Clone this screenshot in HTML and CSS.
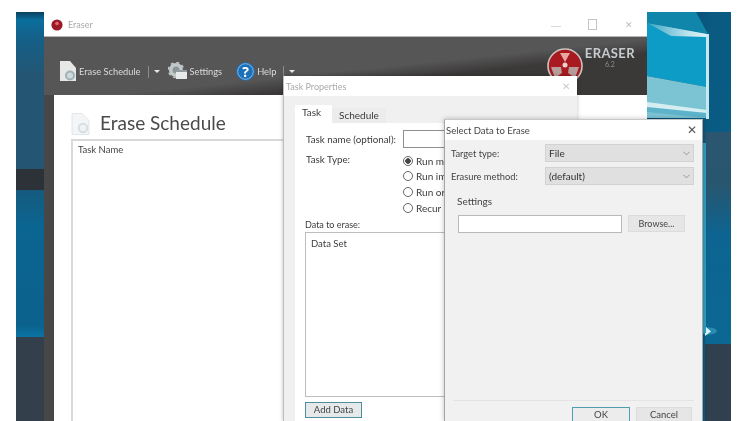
FILE: index.html
```html
<!DOCTYPE html>
<html lang="en">
<head>
<meta charset="utf-8">
<title>Eraser</title>
<link rel="stylesheet" href="styles.css">
</head>
<body>
<div class="desktop">
  <svg class="wallpaper" viewBox="0 0 715 409" width="715" height="409" aria-hidden="true">
    <defs>
      <linearGradient id="leftUpper" x1="0" y1="0" x2="0" y2="1"><stop offset="0" stop-color="#0a3f5c"/><stop offset=".05" stop-color="#0a6f9c"/><stop offset=".16" stop-color="#14608a"/><stop offset=".4" stop-color="#245673"/><stop offset="1" stop-color="#245673"/></linearGradient>
      <linearGradient id="leftLower" x1="0" y1="0" x2="0" y2="1"><stop offset="0" stop-color="#155a7e"/><stop offset=".25" stop-color="#0b6591"/><stop offset=".92" stop-color="#0b628c"/><stop offset="1" stop-color="#0a74a4"/></linearGradient>
      <linearGradient id="rightLower" x1="0" y1="0" x2="0" y2="1"><stop offset="0" stop-color="#2c566f"/><stop offset=".18" stop-color="#28566f"/><stop offset=".35" stop-color="#0d6490"/><stop offset=".9" stop-color="#0a6a94"/><stop offset="1" stop-color="#1c5673"/></linearGradient>
      <linearGradient id="rightTop" x1="0" y1="0" x2="1" y2="1"><stop offset="0" stop-color="#0a3f5e"/><stop offset=".4" stop-color="#0a5a82"/><stop offset="1" stop-color="#0a5f86"/></linearGradient>
      <linearGradient id="streak" x1="0" y1="0" x2="1" y2="0"><stop offset="0" stop-color="#3aa5c4"/><stop offset=".7" stop-color="#bfe4ee"/><stop offset="1" stop-color="#e0f3f7"/></linearGradient>
    </defs>
    <rect width="28" height="158" fill="url(#leftUpper)"/>
    <rect y="157" width="28" height="21" fill="#2c3238"/>
    <rect y="178" width="28" height="147" fill="url(#leftLower)"/>
    <rect y="325" width="28" height="84" fill="#333f4b"/>

    <rect x="631" width="84" height="409" fill="url(#rightTop)"/>
    <polygon points="631,0 680,0 692,22 631,11" fill="#0f86aa"/>
    <polygon points="631,11 691,22 691,75 631,64" fill="#0c9cc6"/>
    <polygon points="631,64 691,75 691,106 631,106" fill="#7cc3d3"/>
    <polygon points="631,91 691,99 691,106 631,100" fill="#5cb3ca"/>
    <polygon points="631,90 691,98 691,101 631,95" fill="#d5eef2"/>
    <polygon points="631,11 691,22 691,25 655,24" fill="url(#streak)"/>
    <rect x="690" y="22" width="3" height="85" fill="#c6e8f0"/>

    <rect x="689" y="120" width="26" height="289" fill="url(#rightLower)"/>
    <rect x="689" y="332" width="26" height="77" fill="#30404e"/>
    <ellipse cx="692" cy="319" rx="9" ry="3.500" fill="#4fb7d8" opacity=".45"/>
    <polygon points="689,314 695,319.500 689,324" fill="#d9f5fb"/>
    <rect x="687" y="131" width="3" height="190" fill="#2fa0c0"/>
  </svg>

  <section class="window main-window">
    <header class="titlebar">
      <svg class="app-dot" viewBox="0 0 12 12" aria-hidden="true"><circle cx="6" cy="6" r="5.600" fill="#9c1b28"/><circle cx="6" cy="4.500" r="1.800" fill="#e46a70"/></svg>
      <span class="app-name">Eraser</span>
      <span class="spacer"></span>
      <span class="winbtn min"></span>
      <span class="winbtn max"></span>
      <span class="winbtn close">✕</span>
    </header>
    <div class="toolbar">
      <svg class="tool-doc" viewBox="0 0 18 21" aria-hidden="true"><path d="M1 0h10l6 7v13H1z" fill="#e6e8e8"/><circle cx="11" cy="14.500" r="5" fill="#9fb2b8"/><circle cx="11" cy="14.500" r="3" fill="#cfd8da"/></svg>
      <span class="tool-label">Erase Schedule</span>
      <span class="tool-sep"></span>
      <span class="tool-arrow"></span>
      <svg class="tool-gear" viewBox="0 0 19 19" aria-hidden="true"><circle cx="8" cy="8" r="7" fill="#c3c9c9"/><circle cx="8" cy="8" r="7.500" fill="none" stroke="#c3c9c9" stroke-width="1.500" stroke-dasharray="3 2.900"/><circle cx="8" cy="8" r="3.500" fill="#8b9599"/><rect x="8" y="8" width="11" height="9" fill="#e7eaea"/><rect x="8" y="8" width="11" height="2" fill="#8f9ba0"/></svg>
      <span class="tool-label">Settings</span>
      <svg class="tool-help" viewBox="0 0 19 19" aria-hidden="true"><circle cx="9.500" cy="9.500" r="9.300" fill="#1b70b8"/><circle cx="9.500" cy="9.500" r="7.800" fill="none" stroke="#9cc8ea" stroke-width=".8"/><text x="9.500" y="14.500" text-anchor="middle" class="q-mark">?</text></svg>
      <span class="tool-label">Help</span>
      <span class="tool-sep"></span>
      <span class="tool-arrow"></span>
      <span class="spacer"></span>
      <svg class="logo" viewBox="0 0 36 36" aria-hidden="true"><circle cx="18" cy="18" r="17" fill="#a81a20" stroke="#c9c4c0" stroke-width="1.600"/><path d="M13 5h10l-5 9z" fill="#e8a8a0"/><path d="M4 19h10l1 6-7 5z" fill="#b89c9c"/><path d="M32 19H22l-1 6 7 5z" fill="#b89c9c"/><circle cx="18" cy="17" r="2.500" fill="#f0d0c8"/></svg>
      <div class="brand"><span class="brand-name">ERASER</span><span class="brand-ver">6.2</span></div>
    </div>
    <div class="main-body">
      <div class="schedule-panel">
        <h1 class="schedule-title">
          <svg class="head-doc" viewBox="0 0 19 22" aria-hidden="true"><path d="M1 .5h10l7 7V21.500H1z" fill="#f3f5f6" stroke="#e2e6e8"/><circle cx="12" cy="15" r="5.200" fill="#d5dfe3"/><circle cx="12" cy="15" r="3.200" fill="#f0f3f4"/></svg>
          <span class="schedule-text">Erase Schedule</span>
        </h1>
        <div class="task-list">Task Name</div>
      </div>
    </div>
  </section>

  <section class="window task-window">
    <header class="dialog-title faded">
      <span>Task Properties</span>
      <span class="spacer"></span>
      <span class="dialog-close faint">✕</span>
    </header>
    <div class="task-body">
      <div class="tabs">
        <span class="tab active">Task</span>
        <span class="tab">Schedule</span>
      </div>
      <div class="tab-page">
        <div class="form-row name-row">
          <label class="form-label">Task name (optional):</label>
          <span class="textbox name-box"></span>
        </div>
        <div class="form-row type-row">
          <label class="form-label">Task Type:</label>
          <div class="radio-group">
            <div class="radio-item"><span class="radio on"></span>Run m</div>
            <div class="radio-item"><span class="radio"></span>Run im</div>
            <div class="radio-item"><span class="radio"></span>Run or</div>
            <div class="radio-item"><span class="radio"></span>Recur</div>
          </div>
        </div>
        <div class="data-label">Data to erase:</div>
        <div class="data-box">Data Set</div>
        <button class="btn add-data" type="button">Add Data</button>
      </div>
    </div>
  </section>

  <section class="window select-window">
    <header class="dialog-title">
      <span>Select Data to Erase</span>
      <span class="spacer"></span>
      <span class="dialog-close">✕</span>
    </header>
    <div class="select-body">
      <div class="select-row target">
        <label class="select-label">Target type:</label>
        <div class="combo"><span>File</span><svg class="chev" viewBox="0 0 8 5" aria-hidden="true"><path d="M.5.500 4 4 7.500.500" fill="none" stroke="#8a8a8a"/></svg></div>
      </div>
      <div class="select-row method">
        <label class="select-label">Erasure method:</label>
        <div class="combo"><span>(default)</span><svg class="chev" viewBox="0 0 8 5" aria-hidden="true"><path d="M.5.500 4 4 7.500.500" fill="none" stroke="#8a8a8a"/></svg></div>
      </div>
      <div class="settings-label">Settings</div>
      <div class="browse-row">
        <span class="textbox path-box"></span>
        <button class="btn browse" type="button">Browse...</button>
      </div>
      <span class="spacer"></span>
      <div class="action-row">
        <button class="btn ok" type="button">OK</button>
        <button class="btn cancel" type="button">Cancel</button>
      </div>
    </div>
  </section>
</div>
</body>
</html>
```

FILE: styles.css
```css
* { box-sizing: border-box; }
html, body { margin: 0; height: 100%; background: #fff; overflow: hidden; }
body { font-family: Lato, "Open Sans", sans-serif; color: #3c3c3c; font-size: 10px; }

.desktop { position: absolute; left: 16px; top: 12px; width: 715px; height: 409px; overflow: hidden; filter: blur(.55px); }
.wallpaper { position: absolute; left: 0; top: 0; display: block; }
.spacer { flex: 1; }

.window { position: absolute; display: flex; flex-direction: column; }

/* main window */
.main-window { left: 28px; top: 1px; width: 603px; height: 408px; background: #474747; }
.titlebar { height: 24px; background: #fff; display: flex; align-items: center; padding: 0 13px 0 7px; border-bottom: 1px solid #b5b5b5; }
.app-dot { width: 12px; height: 12px; margin-right: 5px; }
.app-name { font-size: 9px; color: #a9a9a9; }
.winbtn { width: 10px; height: 10px; display: block; color: #bbb; }
.min { border-bottom: 1px solid #d8d8d8; height: 6px; margin-right: 27px; margin-top: -2px; }
.max { border: 1px solid #c4c4c4; margin-right: 27px; height: 11px; width: 9px; }
.close { font-size: 9px; line-height: 10px; text-align: center; }

.toolbar { height: 58px; display: flex; align-items: center; padding: 11px 12px 0 15px; background: linear-gradient(174deg, #565656 0 54%, #3b3838 66% 100%); color: #e4e4e4; }
.tool-doc { width: 18px; height: 21px; margin-right: 2px; }
.tool-label { font-size: 9.300px; color: #d8dcdc; }
.tool-sep { width: 1px; height: 12px; background: #8a8a8a; margin: 0 5px 0 7px; }
.tool-arrow { width: 0; height: 0; border: 3px solid transparent; border-top: 3px solid #e8e8e8; border-bottom: 0; margin-right: 8px; }
.tool-gear { width: 19px; height: 19px; margin-right: 3px; }
.tool-help { width: 19px; height: 19px; margin: 0 2px 0 14px; }
.q-mark { font: 700 14px "Open Sans", sans-serif; fill: #fff; }
.logo { width: 36px; height: 36px; margin: 0 2px 0 0; align-self: flex-start; }
.brand { display: flex; flex-direction: column; align-items: center; align-self: flex-start; margin: -1px 0 0 0; }
.brand-name { font: 700 13px/13px Lato, sans-serif; color: #c6ccce; letter-spacing: .4px; }
.brand-ver { font-size: 7px; line-height: 8px; color: #8d8d8d; }

.main-body { flex: 1; display: flex; padding-left: 10px; }
.schedule-panel { flex: 1; background: #fff; padding: 14px 0 0 17px; display: flex; flex-direction: column; }
.schedule-title { margin: 0; display: flex; align-items: center; gap: 10px; height: 30px; font-size: 19px; font-weight: 400; color: #4b4b4b; }
.schedule-text { line-height: 26px; height: 28px; }
.head-doc { width: 19px; height: 22px; }
.task-list { flex: 1; border: 2px solid #d9d9d9; border-right: 0; border-bottom: 0; padding: 3px 5px; color: #444; font-size: 9.500px; }

/* dialogs */
.task-window { left: 267px; top: 64px; width: 294px; height: 345px; background: #f0f0f0; box-shadow: 0 0 4px rgba(0,0,0,.25); border-left: 1px solid #bdbdbd; }
.dialog-title { display: flex; align-items: center; background: #fff; flex: none; }
.task-window .dialog-title { height: 20px; padding: 0 7px 0 2px; }
.faded { font-size: 9px; color: #aaa; }
.dialog-close { font-size: 12px; color: #666; line-height: 1; }
.faint { color: #c8c8c8; font-size: 10px; }

.task-body { flex: 1; display: flex; flex-direction: column; padding: 9px 0 0 11px; }
.tabs { display: flex; align-items: flex-end; height: 18px; flex: none; }
.tab { padding: 0 7px; height: 15px; line-height: 14px; background: #ececec; }
.tab.active { height: 18px; background: #fff; line-height: 15px; width: 37px; }
.tab-page { flex: 1; background: #fff; padding: 7px 0 0 10px; display: flex; flex-direction: column; }
.form-row { display: flex; padding-left: 1px; }
.form-label { width: 97px; flex: none; white-space: nowrap; font-size: 9.800px; }
.name-row { align-items: center; height: 18px; }
.textbox { display: block; background: #fff; border: 1px solid #b4b4b4; }
.name-box { width: 160px; height: 18px; border-color: #8f8f8f; }
.type-row { margin-top: 5px; }
.radio-group { display: flex; flex-direction: column; }
.radio-item { display: flex; align-items: center; height: 15.600px; white-space: nowrap; }
.radio { width: 10px; height: 10px; margin-right: 3px; border: 1px solid #666; border-radius: 50%; background: #fff; flex: none; }
.radio.on { background: radial-gradient(circle, #444 0 2.500px, #fff 3px); }
.data-label { margin-top: 4px; font-size: 9px; line-height: 12px; }
.data-box { width: 250px; height: 165px; margin-top: 1px; padding: 5px; border: 1px solid #bdbdbd; font-size: 9.500px; }
.btn { font-family: inherit; font-size: 9.500px; color: #444; background: #e4e4e4; border: 1px solid #dcdcdc; padding: 0; }
.add-data { width: 57px; height: 16px; margin-top: 5px; border: 1.500px solid #4d8f9c; background: #e6e9e9; line-height: 12px; }

.select-window { left: 428px; top: 107px; width: 259px; height: 302px; background: #f1f1f1; border: 1px solid #a5a5a5; border-bottom: 0; border-top-color: #c8c8c8; box-shadow: 0 0 5px rgba(0,0,0,.25); }
.select-window .dialog-title { height: 20px; padding: 0 5px 0 1px; font-size: 9.500px; color: #444; background: #fff; }
.select-window .dialog-close { font-size: 12px; color: #555; }
.select-body { flex: 1; display: flex; flex-direction: column; padding: 4px 8px 0 6px; }
.select-row { display: flex; align-items: center; }
.select-label { width: 94px; flex: none; color: #444; font-size: 9.300px; }
.combo { flex: 1; height: 18px; background: #e0e0e0; border: 1px solid #d2d2d2; display: flex; align-items: center; justify-content: space-between; padding: 0 3px; color: #333; }
.chev { width: 7px; height: 5px; }
.method { margin-top: 5px; }
.settings-label { margin: 9px 0 0 6px; line-height: 14px; color: #444; }
.browse-row { display: flex; align-items: flex-start; margin: 7px 0 0 7px; }
.path-box { width: 164px; height: 18px; border: 1px solid #b8b8b8; }
.browse { width: 57px; height: 17px; margin-left: 6px; background: #e6e6e6; line-height: 13px; font-size: 9px; }
.action-row { border-top: 1px solid #e4e4e4; height: 21px; margin-left: 2px; padding: 6px 2px 0 0; display: flex; justify-content: flex-end; gap: 6px; flex: none; overflow: hidden; }
.ok { width: 58px; height: 15px; border: 1.500px solid #4d9fb0; border-bottom: 0; background: #ececec; line-height: 12px; }
.cancel { width: 56px; height: 15px; background: #e6e6e6; border-bottom: 0; line-height: 12px; }
```
